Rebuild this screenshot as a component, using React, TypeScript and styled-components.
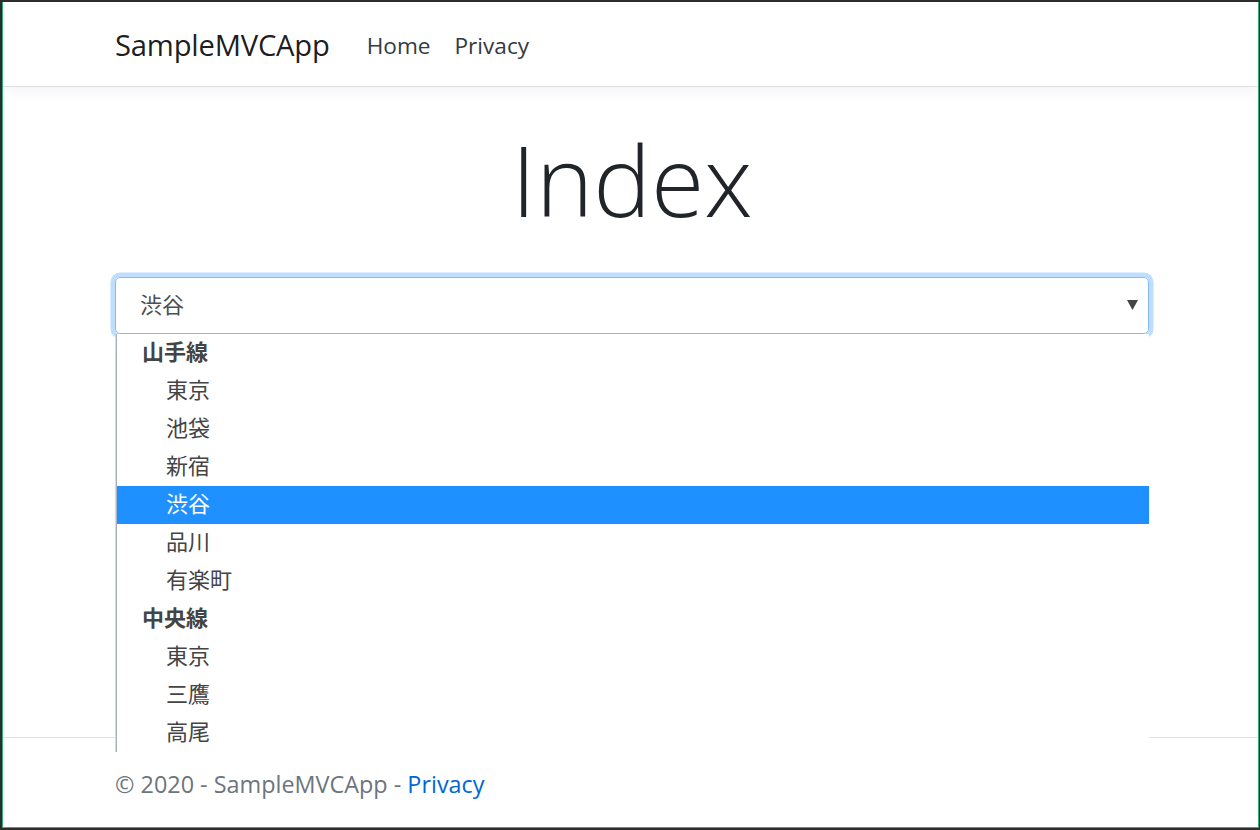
import styled, { createGlobalStyle } from "styled-components"

const GlobalStyle = createGlobalStyle`
  html, body {
    margin: 0;
    padding: 0;
    background: #262626;
  }
  * {
    box-sizing: border-box;
  }
`

const FONT = `"Open Sans", "Noto Sans CJK JP", sans-serif`

const Frame = styled.div`
  width: 1260px;
  height: 830px;
  padding: 2px 1px 2px 2px;
  background: #2d2d2d;
`

const Window = styled.div`
  height: 100%;
  display: flex;
  flex-direction: column;
  background: #fff;
  border-left: 1px solid #27b37a;
  border-right: 1px solid #27b37a;
  border-bottom: 1px solid #27b37a;
  font-family: ${FONT};
  color: #212529;
`

const Navbar = styled.header`
  height: 85px;
  flex: none;
  display: flex;
  align-items: center;
  padding-top: 2px;
  border-bottom: 1px solid #dee2e6;
  box-shadow: 0 4px 12px rgba(0, 0, 0, 0.05);
`

const Container = styled.div`
  width: 1034px;
  margin-left: 112px;
`

const NavInner = styled(Container)`
  display: flex;
  align-items: center;
`

const Brand = styled.a`
  font-size: 29.2px;
  color: rgba(0, 0, 0, 0.9);
  text-decoration: none;
  margin-right: 37px;
  letter-spacing: -0.2px;
`

const NavLinks = styled.nav`
  display: flex;
  gap: 24px;
`

const NavLink = styled.a`
  font-size: 22.6px;
  color: #343a40;
  text-decoration: none;
`

const Main = styled.main`
  flex: 1;
  padding-top: 22px;
`

const Title = styled.h1`
  margin: 0 0 27px;
  text-align: center;
  font-size: 97px;
  font-weight: 300;
  line-height: 141px;
  color: #212529;
`

const SelectWrap = styled.div`
  position: relative;
`

const SelectBox = styled.div`
  height: 57px;
  display: flex;
  align-items: center;
  justify-content: space-between;
  padding: 0 10px 6px 24px;
  border: 1px solid #80bdff;
  border-radius: 5px;
  box-shadow: 0 0 0 4.5px rgba(0, 123, 255, 0.25);
  font-size: 22px;
  color: #495057;
`

const Arrow = styled.svg`
  width: 11px;
  height: 10px;
  margin-top: 4px;
  fill: #444;
`

const DropList = styled.ul`
  position: absolute;
  top: 57px;
  left: 1px;
  right: 0;
  z-index: 2;
  margin: 0;
  padding: 0;
  list-style: none;
  background: #fff;
  border-left: 1px solid #a9b0bf;
  box-shadow: -1px 0 0 #d6dae3;
`

const Row = styled.li<{ $group?: boolean; $active?: boolean }>`
  height: 38px;
  display: flex;
  align-items: center;
  padding-bottom: 6px;
  padding-left: ${(p) => (p.$group ? "25px" : "49px")};
  font-size: 22px;
  font-weight: ${(p) => (p.$group ? 700 : 400)};
  color: ${(p) => (p.$active ? "#fff" : "#444")};
  background: ${(p) => (p.$active ? "#1e90ff" : "transparent")};
`

const Footer = styled.footer`
  height: 90px;
  flex: none;
  display: flex;
  align-items: center;
  padding-top: 2px;
  border-top: 1px solid #dee2e6;
  font-size: 23.4px;
  color: #6c757d;
`

const FooterLink = styled.a`
  color: #0366d6;
  text-decoration: none;
`

const lines = [
  { name: "山手線", stations: ["東京", "池袋", "新宿", "渋谷", "品川", "有楽町"] },
  { name: "中央線", stations: ["東京", "三鷹", "高尾"] },
]

export default function App() {
  const selected = "渋谷"
  return (
    <>
      <GlobalStyle />
      <Frame>
        <Window>
          <Navbar>
            <NavInner>
              <Brand href="#">SampleMVCApp</Brand>
              <NavLinks>
                <NavLink href="#">Home</NavLink>
                <NavLink href="#">Privacy</NavLink>
              </NavLinks>
            </NavInner>
          </Navbar>
          <Main>
            <Container>
              <Title>Index</Title>
              <SelectWrap>
                <SelectBox>
                  <span>{selected}</span>
                  <Arrow viewBox="0 0 11 10">
                    <path d="M0 0 H11 L5.5 10 Z" />
                  </Arrow>
                </SelectBox>
                <DropList>
                  {lines.map((line, li) => (
                    <div key={li}>
                      <Row $group>{line.name}</Row>
                      {line.stations.map((s, i) => (
                        <Row key={i} $active={li === 0 && s === selected}>
                          {s}
                        </Row>
                      ))}
                    </div>
                  ))}
                </DropList>
              </SelectWrap>
            </Container>
          </Main>
          <Footer>
            <Container>
              © 2020 - SampleMVCApp - <FooterLink href="#">Privacy</FooterLink>
            </Container>
          </Footer>
        </Window>
      </Frame>
    </>
  )
}
